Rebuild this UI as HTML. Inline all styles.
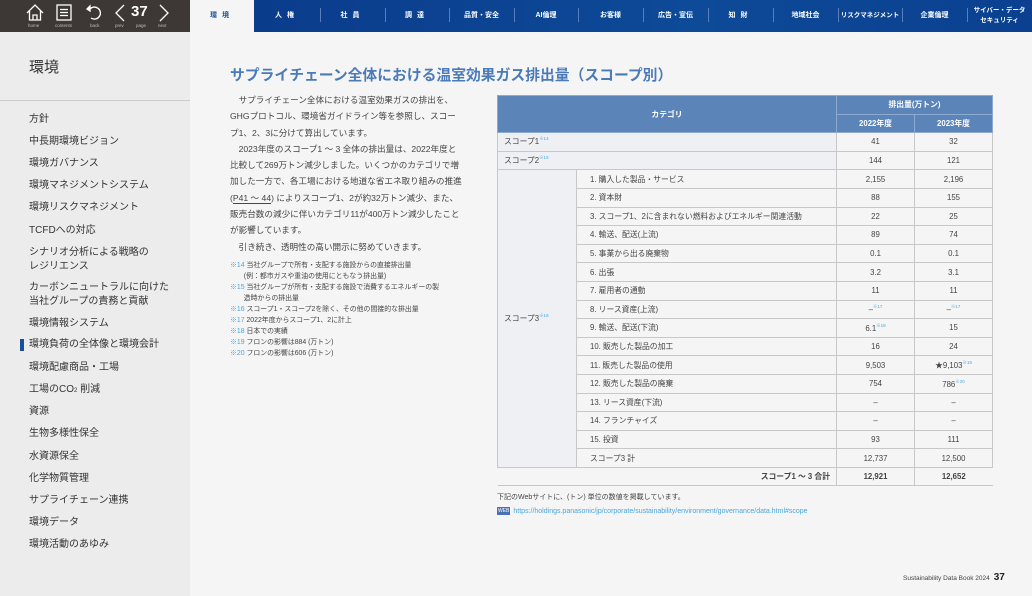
<!DOCTYPE html>
<html><head><meta charset="utf-8"><style>
*{margin:0;padding:0;box-sizing:border-box}
body{width:1032px;height:596px;overflow:hidden;background:#f5f5f5;font-family:"Liberation Sans","Noto Sans CJK JP",sans-serif;color:#3a3a3a;position:relative}
.top{position:absolute;left:0;top:0;width:190px;height:32px;background:#3d3835;color:#fff}
.nav{position:absolute;left:190px;top:0;width:842px;height:32px;background:linear-gradient(90deg,#0a3a8a,#0d4a98 60%,#0b4090)}
.tab0{position:absolute;left:190px;top:0;width:64px;height:32px;background:#f5f5f5;color:#1a4f9c;font-size:7px;font-weight:bold;text-align:center;line-height:32px;letter-spacing:5px}
.t{position:absolute;top:0;height:32px;color:#fff;font-size:7px;font-weight:bold;display:flex;align-items:center;justify-content:center;text-align:center;line-height:10px}
.sep{position:absolute;top:8px;width:1px;height:14px;background:#5a7fb8}
.side{position:absolute;left:0;top:32px;width:190px;height:564px;background:#ececec}
.side .hr{position:absolute;left:0;top:68px;width:190px;height:1px;background:#ccc}
.si{position:absolute;left:29px;font-size:10px;line-height:14px;color:#333}
h1{position:absolute;left:230px;top:64px;font-size:14.8px;color:#4a7ab8;font-weight:bold}
.p{position:absolute;left:230px;top:92px;width:232px;font-size:8.6px;line-height:16.3px;color:#444}
.fn{position:absolute;left:230px;top:260px;width:232px;font-size:6.9px;line-height:11px;color:#444}
.fn b{color:#4aa6db;font-weight:normal}
table{position:absolute;left:497px;top:95px;width:495px;border-collapse:collapse;table-layout:fixed;font-size:7.8px}
td,th{border:1px solid #c8c8c8;height:18.6px;padding:0 6px;color:#444;font-weight:normal}
th{background:#5b84b8;color:#fff;font-weight:bold;border-color:#8eaad0}
.l{background:#eff0f4}
.c{text-align:center}
sup{font-size:4.5px;color:#4aa6db;vertical-align:4px}
.bot{position:absolute;left:497px;top:491px;font-size:7px;color:#444;line-height:14px}
.bot a{color:#4aa6db;text-decoration:none}
.web{display:inline-block;background:#4a70b8;color:#fff;font-size:5px;padding:0 1px;line-height:8px;margin-right:3px;vertical-align:1px}
.foot{position:absolute;left:903px;top:572px;font-size:6.5px;color:#444}
.foot b{font-size:10px;color:#222;margin-left:4px}
</style></head><body>
<div class="top">
<svg style="position:absolute;left:26px;top:4px" width="18" height="17" viewBox="0 0 18 17" fill="none" stroke="#fff" stroke-width="1.3"><path d="M1 9 L9 1 L17 9 M3.5 7 V16 H14.5 V7 M7 16 V11 H11 V16"/></svg>
<svg style="position:absolute;left:56px;top:4px" width="16" height="17" viewBox="0 0 16 17" fill="none" stroke="#fff" stroke-width="1.3"><rect x="1" y="1" width="14" height="15"/><path d="M4 5.5H12M4 8.5H12M4 11.5H12"/></svg>
<svg style="position:absolute;left:86px;top:4px" width="17" height="17" viewBox="0 0 17 17" fill="none" stroke="#fff" stroke-width="1.3"><path d="M4 5 A6 6 0 1 1 5 14"/><path d="M1 5 L4 2 L4 7 Z" fill="#fff"/></svg>
<svg style="position:absolute;left:114px;top:4px" width="12" height="18" viewBox="0 0 12 18" fill="none" stroke="#fff" stroke-width="1.3"><path d="M10 1 L2 9 L10 17"/></svg>
<div style="position:absolute;left:131px;top:3px;font-size:15px;font-weight:bold;color:#fff">37</div>
<svg style="position:absolute;left:158px;top:4px" width="12" height="18" viewBox="0 0 12 18" fill="none" stroke="#fff" stroke-width="1.3"><path d="M2 1 L10 9 L2 17"/></svg>
<div style="position:absolute;top:23px;left:0;width:190px;font-size:4.5px;color:#bbb">
<span style="position:absolute;left:28px">home</span><span style="position:absolute;left:55px">contents</span><span style="position:absolute;left:90px">back</span><span style="position:absolute;left:115px">prev</span><span style="position:absolute;left:136px">page</span><span style="position:absolute;left:158px">next</span></div>
</div>
<div class="nav"></div>
<div class="tab0">環境</div>
<div class="t" style="left:254px;width:66px;letter-spacing:5px">人権</div><div class="sep" style="left:320px"></div>
<div class="t" style="left:320px;width:65px;letter-spacing:5px">社員</div><div class="sep" style="left:385px"></div>
<div class="t" style="left:385px;width:64px;letter-spacing:5px">調達</div><div class="sep" style="left:449px"></div>
<div class="t" style="left:449px;width:65px">品質・安全</div><div class="sep" style="left:514px"></div>
<div class="t" style="left:514px;width:64px">AI倫理</div><div class="sep" style="left:578px"></div>
<div class="t" style="left:578px;width:65px">お客様</div><div class="sep" style="left:643px"></div>
<div class="t" style="left:643px;width:65px">広告・宣伝</div><div class="sep" style="left:708px"></div>
<div class="t" style="left:708px;width:65px;letter-spacing:5px">知財</div><div class="sep" style="left:773px"></div>
<div class="t" style="left:773px;width:65px">地域社会</div><div class="sep" style="left:838px"></div>
<div class="t" style="left:838px;width:64px;font-size:6.5px">リスクマネジメント</div><div class="sep" style="left:902px"></div>
<div class="t" style="left:902px;width:65px">企業倫理</div><div class="sep" style="left:967px"></div>
<div class="t" style="left:967px;width:65px;font-size:6.5px">サイバー・データ<br>セキュリティ</div>

<div class="side"><div class="hr"></div></div>
<div style="position:absolute;left:29px;top:56px;font-size:15px;color:#333">環境</div>
<div class="si" style="top:113px">方針</div>
<div class="si" style="top:135px">中長期環境ビジョン</div>
<div class="si" style="top:157px">環境ガバナンス</div>
<div class="si" style="top:179px">環境マネジメントシステム</div>
<div class="si" style="top:201px">環境リスクマネジメント</div>
<div class="si" style="top:224px">TCFDへの対応</div>
<div class="si" style="top:246px">シナリオ分析による戦略の<br>レジリエンス</div>
<div class="si" style="top:281px">カーボンニュートラルに向けた<br>当社グループの責務と貢献</div>
<div class="si" style="top:317px">環境情報システム</div>
<div style="position:absolute;left:20px;top:339px;width:4px;height:12px;background:#1a4f9c"></div>
<div class="si" style="top:338px">環境負荷の全体像と環境会計</div>
<div class="si" style="top:361px">環境配慮商品・工場</div>
<div class="si" style="top:383px">工場のCO<span style="font-size:6px">2</span> 削減</div>
<div class="si" style="top:405px">資源</div>
<div class="si" style="top:427px">生物多様性保全</div>
<div class="si" style="top:450px">水資源保全</div>
<div class="si" style="top:472px">化学物質管理</div>
<div class="si" style="top:494px">サプライチェーン連携</div>
<div class="si" style="top:516px">環境データ</div>
<div class="si" style="top:538px">環境活動のあゆみ</div>

<h1>サプライチェーン全体における温室効果ガス排出量（スコープ別）</h1>
<div class="p">　サプライチェーン全体における温室効果ガスの排出を、GHGプロトコル、環境省ガイドライン等を参照し、スコープ1、2、3に分けて算出しています。<br>　2023年度のスコープ1 ～ 3 全体の排出量は、2022年度と比較して269万トン減少しました。いくつかのカテゴリで増加した一方で、各工場における地道な省エネ取り組みの推進(<span style="border-bottom:1px solid #1a4f9c">P41 ～ 44</span>) によりスコープ1、2が約32万トン減少、また、販売台数の減少に伴いカテゴリ11が400万トン減少したことが影響しています。<br>　引き続き、透明性の高い開示に努めていきます。</div>
<div class="fn"><b>※14</b> 当社グループで所有・支配する施設からの直接排出量<br>　　(例：都市ガスや重油の使用にともなう排出量)<br><b>※15</b> 当社グループが所有・支配する施設で消費するエネルギーの製<br>　　造時からの排出量<br><b>※16</b> スコープ1・スコープ2を除く、その他の間接的な排出量<br><b>※17</b> 2022年度からスコープ1、2に計上<br><b>※18</b> 日本での実績<br><b>※19</b> フロンの影響は884 (万トン)<br><b>※20</b> フロンの影響は606 (万トン)</div>

<table>
<colgroup><col style="width:79px"><col style="width:260px"><col style="width:78px"><col style="width:78px"></colgroup>
<tr><th colspan="2" rowspan="2" class="c">カテゴリ</th><th colspan="2" class="c">排出量(万トン)</th></tr>
<tr><th class="c">2022年度</th><th class="c">2023年度</th></tr>
<tr><td colspan="2" class="l">スコープ1<sup>※14</sup></td><td class="c">41</td><td class="c">32</td></tr>
<tr><td colspan="2" class="l">スコープ2<sup>※15</sup></td><td class="c">144</td><td class="c">121</td></tr>
<tr><td rowspan="16" class="l">スコープ3<sup>※16</sup></td><td style="padding-left:13px">1. 購入した製品・サービス</td><td class="c">2,155</td><td class="c">2,196</td></tr>
<tr><td style="padding-left:13px">2. 資本財</td><td class="c">88</td><td class="c">155</td></tr>
<tr><td style="padding-left:13px">3. スコープ1、2に含まれない燃料およびエネルギー関連活動</td><td class="c">22</td><td class="c">25</td></tr>
<tr><td style="padding-left:13px">4. 輸送、配送(上流)</td><td class="c">89</td><td class="c">74</td></tr>
<tr><td style="padding-left:13px">5. 事業から出る廃棄物</td><td class="c">0.1</td><td class="c">0.1</td></tr>
<tr><td style="padding-left:13px">6. 出張</td><td class="c">3.2</td><td class="c">3.1</td></tr>
<tr><td style="padding-left:13px">7. 雇用者の通勤</td><td class="c">11</td><td class="c">11</td></tr>
<tr><td style="padding-left:13px">8. リース資産(上流)</td><td class="c">–<sup>※17</sup></td><td class="c">–<sup>※17</sup></td></tr>
<tr><td style="padding-left:13px">9. 輸送、配送(下流)</td><td class="c">6.1<sup>※18</sup></td><td class="c">15</td></tr>
<tr><td style="padding-left:13px">10. 販売した製品の加工</td><td class="c">16</td><td class="c">24</td></tr>
<tr><td style="padding-left:13px">11. 販売した製品の使用</td><td class="c">9,503</td><td class="c">★9,103<sup>※19</sup></td></tr>
<tr><td style="padding-left:13px">12. 販売した製品の廃棄</td><td class="c">754</td><td class="c">786<sup>※20</sup></td></tr>
<tr><td style="padding-left:13px">13. リース資産(下流)</td><td class="c">–</td><td class="c">–</td></tr>
<tr><td style="padding-left:13px">14. フランチャイズ</td><td class="c">–</td><td class="c">–</td></tr>
<tr><td style="padding-left:13px">15. 投資</td><td class="c">93</td><td class="c">111</td></tr>
<tr><td style="padding-left:13px">スコープ3 計</td><td class="c">12,737</td><td class="c">12,500</td></tr>
<tr><td colspan="2" style="text-align:right;font-weight:bold;border-left:none">スコープ1 ～ 3 合計</td><td class="c" style="font-weight:bold">12,921</td><td class="c" style="font-weight:bold;border-right:none">12,652</td></tr>
</table>
<div class="bot">下記のWebサイトに、(トン) 単位の数値を掲載しています。<br><span class="web">WEB</span><a>https://holdings.panasonic/jp/corporate/sustainability/environment/governance/data.html#scope</a></div>
<div class="foot">Sustainability Data Book 2024<b>37</b></div>
</body></html>
